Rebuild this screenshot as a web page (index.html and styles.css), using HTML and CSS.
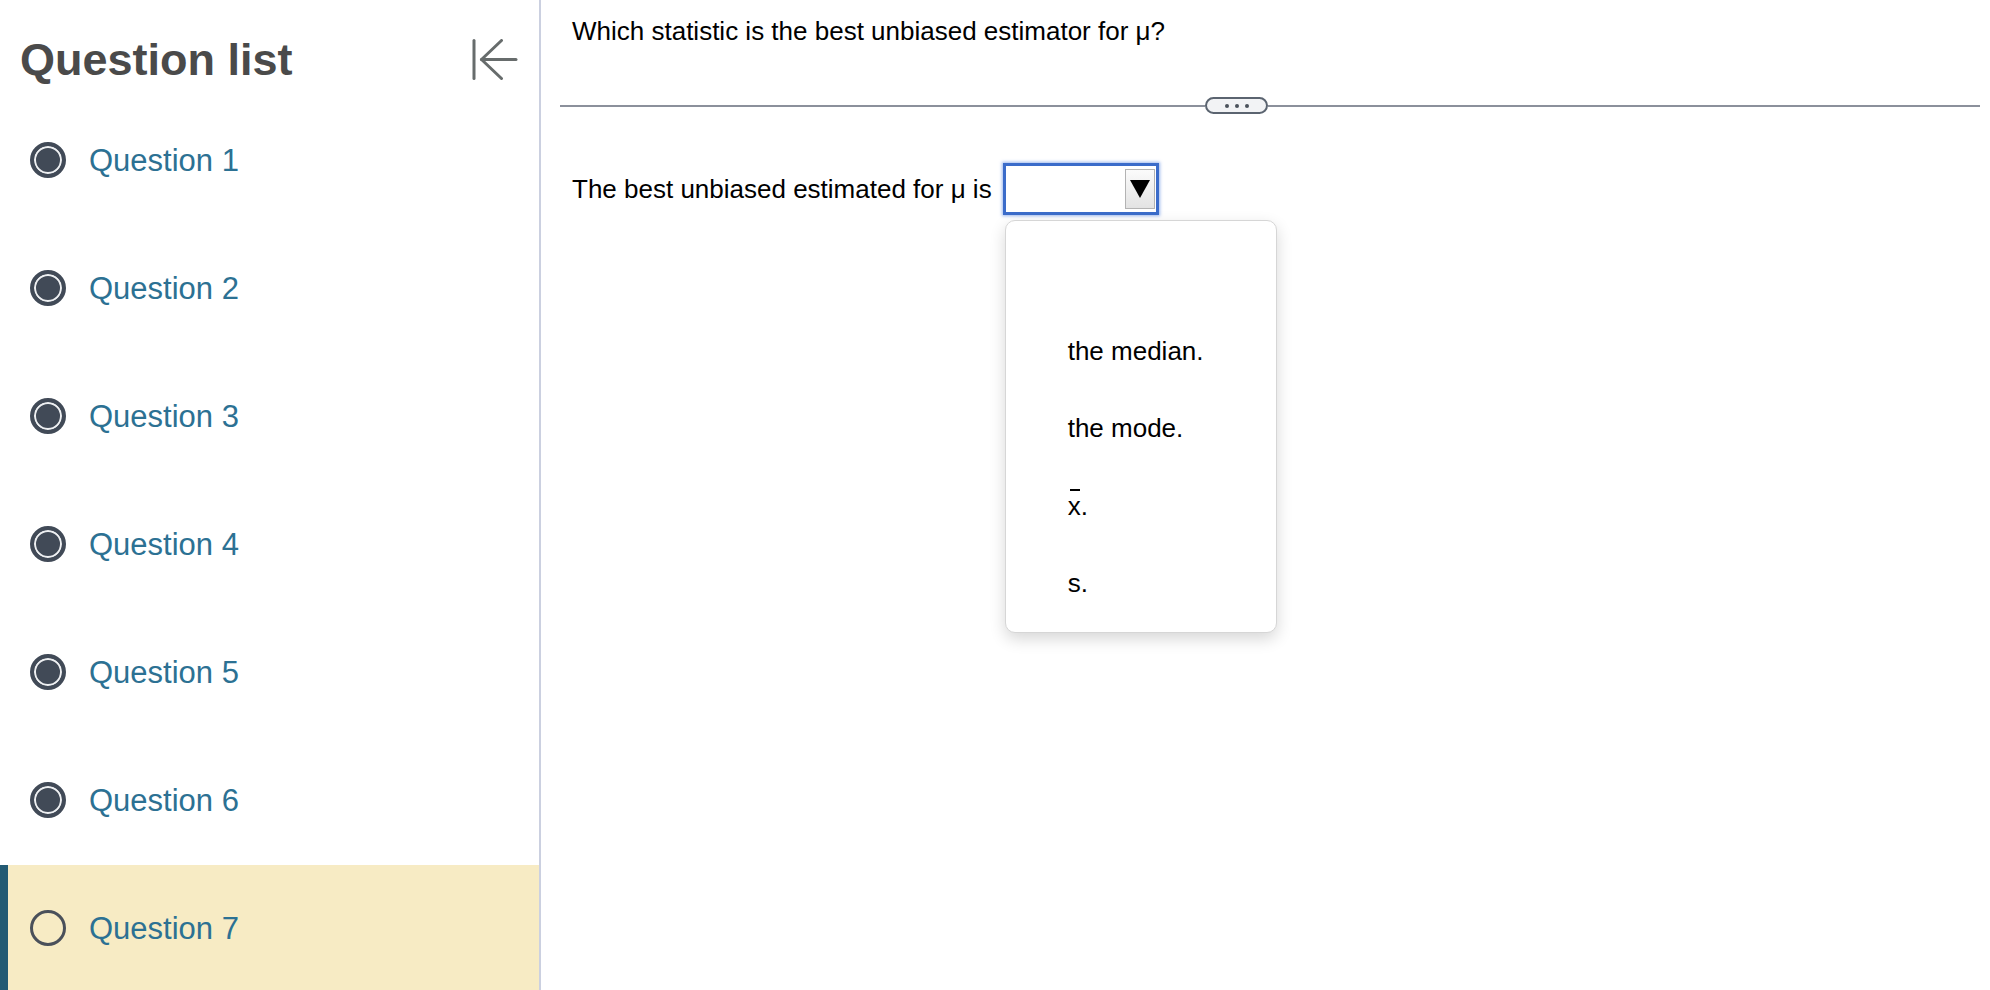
FILE: index.html
```html
<!DOCTYPE html>
<html lang="en">
<head>
<meta charset="utf-8">
<title>Question list</title>
<link rel="stylesheet" href="styles.css">
</head>
<body>
<div class="app">
  <aside class="sidebar">
    <div class="sidebar-header">
      <h1 class="sidebar-title">Question list</h1>
      <button class="collapse-btn" aria-label="Collapse question list">
        <svg width="46" height="42" viewBox="0 0 46 42" fill="none" stroke="#676c6c" stroke-width="3" stroke-linecap="round" stroke-linejoin="round">
          <line x1="2" y1="1.5" x2="2" y2="39.5"/>
          <line x1="9.5" y1="20.5" x2="44" y2="20.5"/>
          <polyline points="29.5,1.5 9.5,20.5 29.5,39.5"/>
        </svg>
      </button>
    </div>
    <ul class="q-list">
      <li class="q-item"><span class="radio radio-done"></span><span class="q-label">Question 1</span></li>
      <li class="q-item"><span class="radio radio-done"></span><span class="q-label">Question 2</span></li>
      <li class="q-item"><span class="radio radio-done"></span><span class="q-label">Question 3</span></li>
      <li class="q-item"><span class="radio radio-done"></span><span class="q-label">Question 4</span></li>
      <li class="q-item"><span class="radio radio-done"></span><span class="q-label">Question 5</span></li>
      <li class="q-item"><span class="radio radio-done"></span><span class="q-label">Question 6</span></li>
      <li class="q-item q-item-active"><span class="radio radio-empty"></span><span class="q-label">Question 7</span></li>
    </ul>
  </aside>
  <main class="content">
    <p class="question">Which statistic is the best unbiased estimator for μ?</p>
    <div class="splitter">
      <span class="splitter-line splitter-left"></span>
      <span class="splitter-handle"><i></i><i></i><i></i></span>
      <span class="splitter-line splitter-right"></span>
    </div>
    <div class="answer-row">
      <span class="answer-text">The best unbiased estimated for μ is</span>
      <span class="select-wrap">
        <span class="select-box">
          <span class="select-btn">
            <svg width="20" height="18" viewBox="0 0 20 18"><polygon points="0,0 20,0 10,18" fill="#000"/></svg>
          </span>
        </span>
        <ul class="dropdown">
          <li class="opt"></li>
          <li class="opt">the median.</li>
          <li class="opt">the mode.</li>
          <li class="opt"><span class="xbar">x</span>.</li>
          <li class="opt">s.</li>
        </ul>
      </span>
    </div>
  </main>
</div>
</body>
</html>
```
FILE: styles.css
```css
* { box-sizing: border-box; }

html, body {
  margin: 0;
  padding: 0;
  background: #ffffff;
  font-family: "Liberation Sans", Arial, sans-serif;
}

.app {
  display: flex;
  height: 990px;
  overflow: hidden;
}

/* ---------- Sidebar ---------- */
.sidebar {
  width: 541px;
  flex: none;
  border-right: 2px solid #cbd0e0;
  display: flex;
  flex-direction: column;
}

.sidebar-header {
  height: 97px;
  flex: none;
  padding: 35px 21px 0 20px;
  display: flex;
  justify-content: space-between;
  align-items: flex-start;
}

.sidebar-title {
  margin: 0;
  font-size: 45px;
  line-height: 50px;
  font-weight: 700;
  color: #4a4a4a;
}

.collapse-btn {
  margin: 4px 0 0 0;
  padding: 0;
  border: 0;
  background: transparent;
  display: flex;
}

.q-list {
  list-style: none;
  margin: 0;
  padding: 0;
  flex: none;
}

.q-item {
  height: 128px;
  padding: 0 0 2px 30px;
  display: flex;
  align-items: center;
  gap: 23px;
}

.q-item-active {
  background: #f7ebc4;
  box-shadow: inset 8px 0 0 #235a73;
}

.q-label {
  font-size: 31px;
  line-height: 36px;
  color: #2c7193;
  padding-top: 2px;
}

.radio {
  width: 36px;
  height: 36px;
  border-radius: 50%;
  flex: none;
}

.radio-done {
  background: #414a57;
  border: 4px solid #414a57;
  box-shadow: inset 0 0 0 2px #eef0f2;
}

.radio-empty {
  border: 3.5px solid #4a505a;
  background: transparent;
}

/* ---------- Main ---------- */
.content {
  flex: 1;
  padding: 16px 10px 0 19px;
}

.question {
  margin: 0 0 0 12px;
  font-size: 26px;
  line-height: 30px;
  color: #000;
}

.splitter {
  margin-top: 51px;
  display: flex;
  align-items: center;
}

.splitter-line {
  height: 2px;
  background: #8b909b;
}

.splitter-left { width: 645px; }
.splitter-right { flex: 1; }

.splitter-handle {
  width: 63px;
  height: 17px;
  border: 2px solid #5b6470;
  border-radius: 9px;
  background: #f2f3f5;
  display: flex;
  align-items: center;
  justify-content: center;
  gap: 6px;
}

.splitter-handle i {
  width: 4px;
  height: 4px;
  border-radius: 50%;
  background: #4b525b;
}

.answer-row {
  margin: 49px 0 0 12px;
  display: flex;
  align-items: center;
  gap: 11px;
}

.answer-text {
  font-size: 26px;
  line-height: 30px;
  color: #000;
}

.select-wrap {
  position: relative;
  display: block;
}

.select-box {
  width: 156px;
  height: 52px;
  border: 3px solid #3b6cca;
  box-shadow: 0 0 3px 1px rgba(90, 135, 225, 0.6);
  background: #fff;
  display: flex;
  justify-content: flex-end;
  align-items: center;
  padding-right: 1px;
}

.select-btn {
  width: 30px;
  height: 40px;
  border: 1px solid #b3b3b3;
  background: linear-gradient(#fbfbfb, #e3e3e3);
  display: flex;
  align-items: center;
  justify-content: center;
}

.dropdown {
  position: absolute;
  left: 2px;
  top: 57px;
  width: 272px;
  height: 413px;
  margin: 0;
  padding: 14px 0 0 62px;
  list-style: none;
  background: #fff;
  border: 1px solid #d6d6d6;
  border-radius: 10px;
  box-shadow: 0 6px 16px rgba(0, 0, 0, 0.16);
  z-index: 5;
}

.opt {
  height: 77.5px;
  font-size: 26px;
  line-height: 77px;
  color: #000;
}

.xbar {
  position: relative;
  display: inline-block;
}

.xbar::before {
  content: "";
  position: absolute;
  left: 2px;
  top: 21px;
  width: 10px;
  height: 2px;
  background: #000;
}
```
